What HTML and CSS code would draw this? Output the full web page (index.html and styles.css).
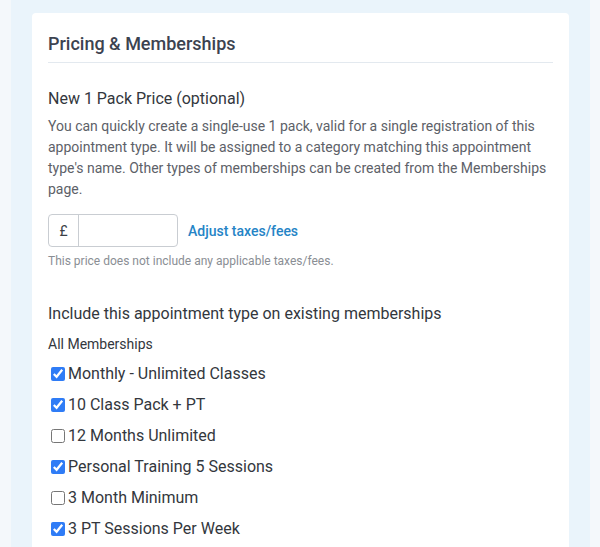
FILE: index.html
```html
<!DOCTYPE html>
<html lang="en">
<head>
    <meta charset="UTF-8">
    <title>Pricing &amp; Memberships</title>
    <meta name="viewport" content="width=device-width, initial-scale=1">
    <link rel="stylesheet" href="styles.css">
</head>
<body>
    <div class="page">
        <div class="strip"></div>
        <main class="main">
            <section class="card">
                <h2 class="card-title">Pricing &amp; Memberships</h2>

                <h3 class="field-title">New 1 Pack Price (optional)</h3>
                <p class="field-help">You can quickly create a single-use 1 pack, valid for a single registration of this appointment type. It will be assigned to a category matching this appointment type's name. Other types of memberships can be created from the Memberships page.</p>

                <div class="price-row">
                    <div class="input-group">
                        <span class="prefix">£</span>
                        <input type="text" class="price-input">
                    </div>
                    <a href="#" class="link">Adjust taxes/fees</a>
                </div>
                <div class="note">This price does not include any applicable taxes/fees.</div>

                <h3 class="field-title section-gap">Include this appointment type on existing memberships</h3>
                <div class="group-label">All Memberships</div>
                <ul class="checks">
                    <li><label><input type="checkbox" checked>Monthly - Unlimited Classes</label></li>
                    <li><label><input type="checkbox" checked>10 Class Pack + PT</label></li>
                    <li><label><input type="checkbox">12 Months Unlimited</label></li>
                    <li><label><input type="checkbox" checked>Personal Training 5 Sessions</label></li>
                    <li><label><input type="checkbox">3 Month Minimum</label></li>
                    <li><label><input type="checkbox" checked>3 PT Sessions Per Week</label></li>
                </ul>
            </section>
        </main>
        <div class="strip strip-right"></div>
    </div>
</body>
</html>
```

FILE: styles.css
```css
html, body { margin: 0; height: 100%; }
body { font-family: Roboto, "Liberation Sans", sans-serif; color: #3a3f47; background: #f4f8fb; overflow: hidden; }
.page { display: flex; min-height: 100%; }
.strip { width: 11px; background: #f4f8fb; flex: none; }
.strip-right { width: 10px; }
.main { flex: 1; background: #eaf4fb; padding: 13px 21px 0 21px; }
.card {
    background: #fff;
    border-radius: 4px;
    padding: 19px 16px 20px;
}
.card-title {
    margin: 0;
    font-size: 18px;
    line-height: 24px;
    font-weight: 500;
    color: #3c4350;
    padding-bottom: 6px;
    border-bottom: 1px solid #e3e9ef;
}
.field-title {
    margin: 25px 0 0;
    font-size: 16px;
    line-height: 22px;
    font-weight: 400;
    color: #33373d;
}
.field-help {
    margin: 6px 0 0;
    font-size: 14px;
    line-height: 21px;
    color: #5d6168;
}
.price-row { display: flex; align-items: center; gap: 10px; margin-top: 14px; }
.input-group {
    display: flex;
    height: 33px;
    width: 130px;
    border: 1px solid #c9cdd2;
    border-radius: 4px;
    box-sizing: border-box;
}
.prefix {
    width: 29px;
    border-right: 1px solid #c9cdd2;
    display: flex;
    align-items: center;
    justify-content: center;
    font-size: 14px;
    color: #3a3f47;
}
.price-input { flex: 1; min-width: 0; border: 0; outline: none; font-size: 14px; padding: 0 8px; background: transparent; }
.link { color: #2584c6; text-decoration: none; font-size: 14px; font-weight: 500; }
.note { margin-top: 5px; font-size: 12px; line-height: 18px; color: #8a8e94; }
.section-gap { margin-top: 33px; }
.group-label { margin-top: 9px; font-size: 14px; line-height: 20px; color: #33373d; }
.checks { list-style: none; margin: 4px 0 0; padding: 0; }
.checks li { height: 31px; line-height: 31px; font-size: 16px; color: #33373d; }
.checks label { display: flex; align-items: center; }
.checks input { margin: 0 3px 0 3px; width: 14px; height: 14px; accent-color: #2f7cf6; }
```
